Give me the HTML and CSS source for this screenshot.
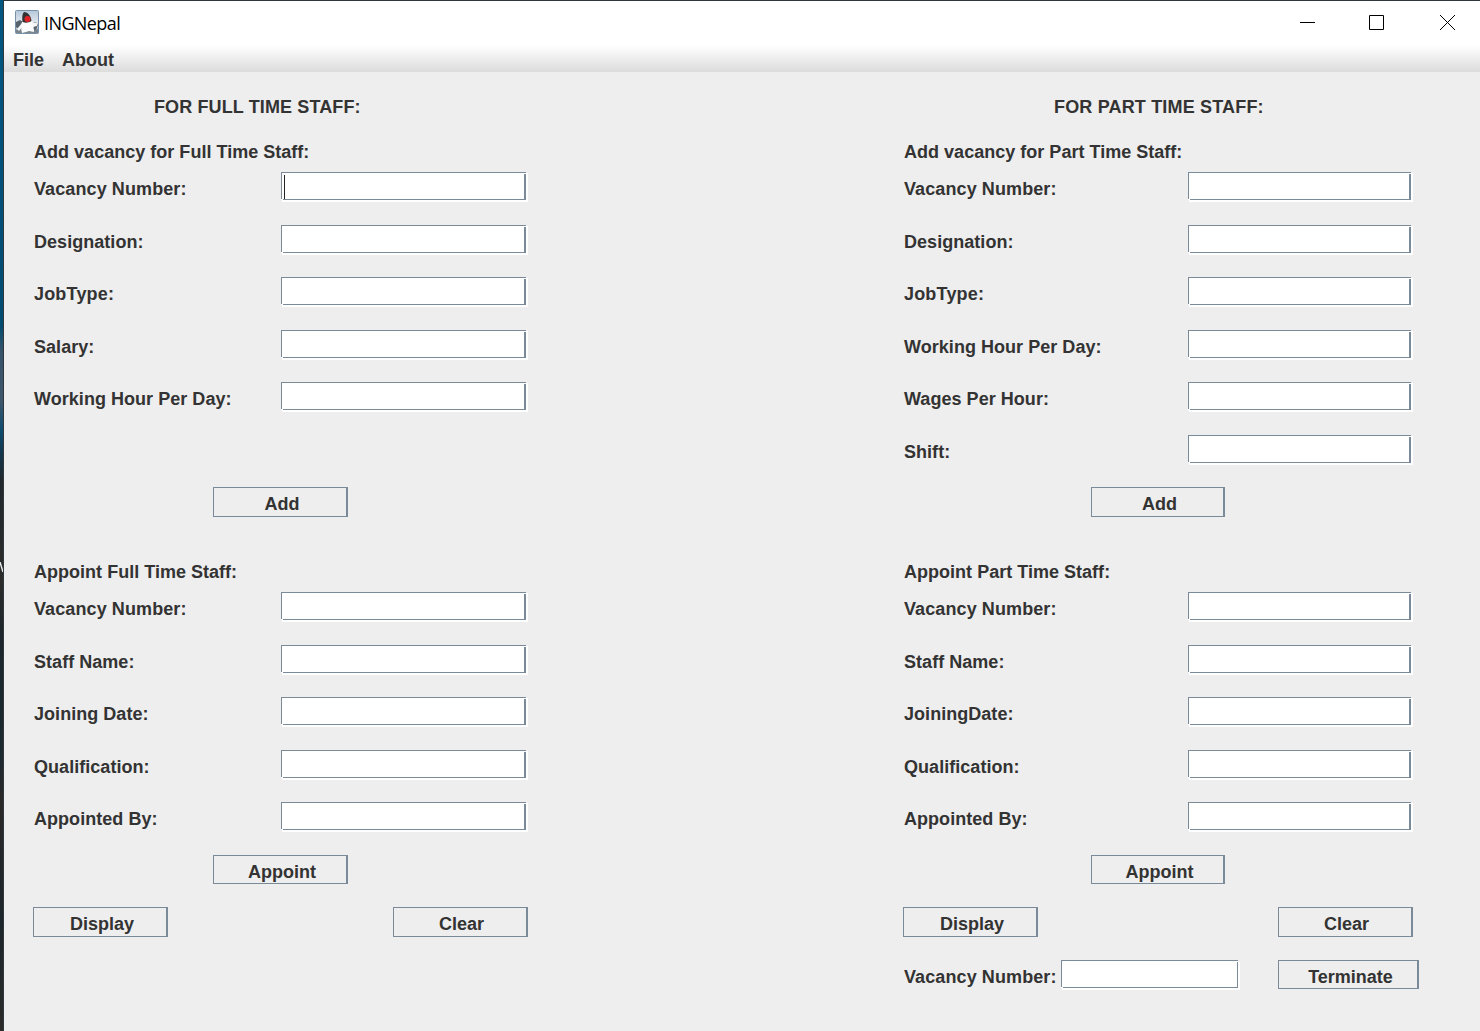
FILE: index.html
```html
<!DOCTYPE html>
<html lang="en">
<head>
<meta charset="utf-8">
<title>INGNepal</title>
<link rel="stylesheet" href="styles.css">
</head>
<body>
<div class="desktop">
<svg class="behind" width="3" height="12" viewBox="0 0 3 12"><path d="M0 0l3 10" fill="none" stroke="#e8edf0" stroke-width="1.4"/></svg>
<main class="window">
  <header class="titlebar">
    <svg class="app-icon" width="24" height="24" viewBox="0 0 24 24">
      <defs><linearGradient id="sky" x2="0" y2="1"><stop stop-color="#b5c7da"/><stop offset=".55" stop-color="#e2e9ef"/><stop offset="1" stop-color="#8299ad"/></linearGradient></defs>
      <rect x=".5" y=".5" width="23" height="23" rx="1" fill="url(#sky)" stroke="#7890a8"/>
      <path d="M1 12l4-2 3 2v5l-3 3-4-3zM17 13l5-1 1 3-2 5-4 1z" fill="#56636d"/>
      <path d="M1 20l6-1 12 1 4-1v4H1z" fill="#7a858d"/>
      <path d="M2 19l5-6 2 2-5 6zM16 10l3 3 4-1-1 4-4 1-3-3z" fill="#f4f4f4"/>
      <path d="M7 12l9-2c2 3 3 8 3 12l-5-1-3 1-4 1c-1-3-1-7 0-11z" fill="#fbfbfb"/>
      <path d="M9 2c4 0 7 4 7.500 9-3 2-6 2-9 1-.5-4-.5-8 1.500-10z" fill="#333"/>
      <circle cx="12.500" cy="9" r="3" fill="#e02127"/>
    </svg>
    <h1 class="title">INGNepal</h1>
    <div class="controls">
      <svg width="15" height="15" viewBox="0 0 15 15"><path d="M0 7.5h15"/></svg>
      <svg width="15" height="15" viewBox="0 0 15 15"><path d="M.5.5h14v14H.5z"/></svg>
      <svg width="15" height="15" viewBox="0 0 15 15"><path d="M0 0l15 15M15 0L0 15"/></svg>
    </div>
  </header>
  <nav class="menubar"><span>File</span><span>About</span></nav>
  <div class="content">
    <section class="staff full">
      <h2>FOR FULL TIME STAFF:</h2>
      <h3>Add vacancy for Full Time Staff:</h3>
      <div class="form vacancy">
        <label class="number">Vacancy Number:</label><div class="field"><i class="caret"></i></div>
        <label>Designation:</label><div class="field"></div>
        <label class="job">JobType:</label><div class="field"></div>
        <label>Salary:</label><div class="field"></div>
        <label>Working Hour Per Day:</label><div class="field"></div>
      </div>
      <div class="submit"><button>Add</button></div>
      <h3 class="second">Appoint Full Time Staff:</h3>
      <div class="form appoint">
        <label class="number">Vacancy Number:</label><div class="field"></div>
        <label>Staff Name:</label><div class="field"></div>
        <label>Joining Date:</label><div class="field"></div>
        <label>Qualification:</label><div class="field"></div>
        <label>Appointed By:</label><div class="field"></div>
      </div>
      <div class="submit low"><button>Appoint</button></div>
      <div class="actions"><button>Display</button><button class="clear">Clear</button></div>
    </section>
    <section class="staff part">
      <h2>FOR PART TIME STAFF:</h2>
      <h3>Add vacancy for Part Time Staff:</h3>
      <div class="form vacancy">
        <label class="number">Vacancy Number:</label><div class="field"></div>
        <label>Designation:</label><div class="field"></div>
        <label class="job">JobType:</label><div class="field"></div>
        <label>Working Hour Per Day:</label><div class="field"></div>
        <label>Wages Per Hour:</label><div class="field"></div>
        <label>Shift:</label><div class="field"></div>
      </div>
      <div class="submit"><button>Add</button></div>
      <h3 class="second">Appoint Part Time Staff:</h3>
      <div class="form appoint">
        <label class="number">Vacancy Number:</label><div class="field"></div>
        <label>Staff Name:</label><div class="field"></div>
        <label>JoiningDate:</label><div class="field"></div>
        <label>Qualification:</label><div class="field"></div>
        <label>Appointed By:</label><div class="field"></div>
      </div>
      <div class="submit low"><button>Appoint</button></div>
      <div class="actions"><button>Display</button><button class="clear">Clear</button></div>
      <div class="terminate"><label class="number">Vacancy Number:</label><div class="field"></div><button>Terminate</button></div>
    </section>
  </div>
</main>
</div>
</body>
</html>
```
FILE: styles.css
```css
* { box-sizing: border-box; }
body { margin: 0; }
.desktop {
  position: relative;
  height: 1031px;
  padding: 1px 0 0 4px;
  overflow: hidden;
  background: linear-gradient(#00577f 0, #00507a 200px, #004b70 325px, #35536b 350px, #3f566b 400px, #0d4c6e 430px, #123a52 450px, #20272d 480px, #2c2c2a 580px, #1a252c 640px, #1c2930 760px, #2b2828 800px, #1b252b 920px, #2b2b29 1031px);
}
.desktop::before {
  content: "";
  position: absolute;
  inset: 0 0 auto 3px;
  height: 1031px;
  background: #30383d;
}
.behind { position: absolute; left: 0; top: 562px; }
.window {
  position: relative;
  height: 1030px;
  background: #eee;
  color: #333;
  font: bold 18px/30px "Liberation Sans", Arial, sans-serif;
  letter-spacing: .04px;
}
.titlebar { display: flex; height: 44px; padding-left: 11px; background: #fff; align-items: center; }
.app-icon { margin-bottom: 2px; }
.title { margin: 0 0 1px 5px; font: 18px/24px "Open Sans", "Noto Sans", sans-serif; letter-spacing: -.6px; color: #000; }
.controls { display: flex; gap: 54px; margin: 0 25px 1px auto; }
.controls svg { fill: none; stroke: #000; }
.controls svg:last-child { margin-left: 2px; }
.menubar {
  display: flex;
  gap: 18px;
  height: 27px;
  padding: 0 9px;
  letter-spacing: 0;
  background: linear-gradient(#fff, #dcdcdc);
}
.content { display: grid; grid-template-columns: 870px 1fr; padding-left: 30px; }
h2, h3 { margin: 0; font: inherit; height: 30px; }
h2 { margin-top: 20px; padding-left: 120px; letter-spacing: .12px; }
h3 { margin-top: 15px; letter-spacing: .02px; }
.part h2 { padding-left: 150px; letter-spacing: .17px; }
.form { display: grid; grid-template-columns: 247px 245px; padding-top: 5px; }
.form.vacancy { grid-template-rows: 53px 52px 53px 52px 53px 52px; height: 320px; }
.form.appoint { grid-template-rows: 53px 52px 53px 52px 53px; height: 268px; }
.part .form { grid-template-columns: 284px 223px; }
label { padding-top: 2px; white-space: nowrap; }
.number { letter-spacing: .1px; }
.job { letter-spacing: .18px; }
.field {
  position: relative;
  height: 28px;
  border: 1px solid #7a8a99;
  border-right-width: 2px;
  background: #fff;
  box-shadow: 1px 2px #fff, 2px 1px #fff, 2px 2px #fff;
}
/* Gaps in the bevel at the top right and bottom left corners */
.field::before, .field::after { content: ""; position: absolute; background: #fff; }
.field::before { top: 0; right: -2px; width: 2px; height: 1px; }
.field::after { bottom: -1px; left: -1px; width: 2px; height: 1px; }
.caret { display: block; width: 1px; height: 24px; margin: 2px 0 0 2px; background: #222; }
.submit { height: 30px; padding-left: 179px; }
.part .submit { padding-left: 187px; }
button {
  display: block;
  width: 135px;
  height: 30px;
  padding: 3px 0 0 4px;
  border: 1px solid #7a8a99;
  border-right-width: 2px;
  background: #eee;
  color: #333;
  font: inherit;
  line-height: 26px;
}
.clear { padding-left: 3px; }
.part .submit button { width: 134px; }
.submit.low { height: 52px; }
.low button, .terminate button { height: 29px; padding-top: 4px; line-height: 24px; }
.second { margin-top: 40px; }
.actions { display: grid; grid-template-columns: 360px 135px; height: 53px; margin-left: -1px; }
.part .actions { grid-template-columns: 375px 135px; }
.terminate { display: grid; grid-template-columns: 157px 177px 181px; }
.terminate .field { border-right-width: 1px; box-shadow: 1px 2px #fff, 2px 2px #fff; }
.terminate .field::before { right: -1px; width: 1px; }
.terminate button { width: 141px; margin-left: 40px; padding-left: 5px; }
```
